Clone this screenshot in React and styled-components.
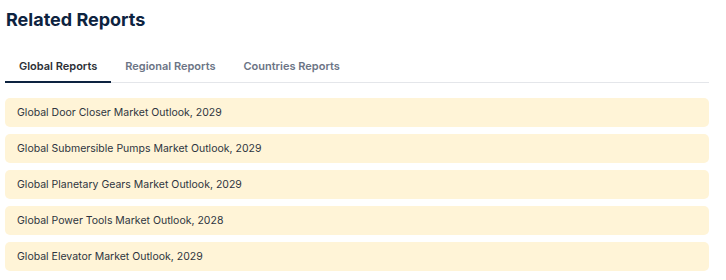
import React, { useState } from "react";
import styled, { createGlobalStyle } from "styled-components";

const GlobalStyle = createGlobalStyle`
  body {
    margin: 0;
    background: #fff;
    font-family: Inter, "Noto Sans", sans-serif;
  }
`;

const Wrapper = styled.section`
  width: 704px;
  padding: 8px 0 0 5px;
`;

const Title = styled.h2`
  margin: 0 0 0 1px;
  font-size: 18px;
  font-weight: 700;
  line-height: 24px;
  color: #0d2340;
`;

const TabBar = styled.div`
  display: flex;
  margin-top: 19px;
  border-bottom: 1px solid #e4e6ea;
`;

const Tab = styled.button`
  border: none;
  background: transparent;
  padding: 0 14px;
  height: 32px;
  margin-bottom: -1px;
  font-family: inherit;
  font-size: 11px;
  font-weight: 600;
  color: ${(p) => (p.$active ? "#2b2f36" : "#6b7485")};
  border-bottom: 2px solid ${(p) => (p.$active ? "#0d2340" : "transparent")};
  cursor: pointer;
`;

const List = styled.ul`
  list-style: none;
  margin: 15px 0 0;
  padding: 0;
  display: flex;
  flex-direction: column;
  gap: 7px;
`;

const Item = styled.li`
  height: 29px;
  display: flex;
  align-items: center;
  padding: 0 12px;
  background: #fff4d7;
  border-radius: 5px;
  font-size: 10.5px;
  color: #2e3440;
`;

const tabs = ["Global Reports", "Regional Reports", "Countries Reports"];

const reports = [
  "Global Door Closer Market Outlook, 2029",
  "Global Submersible Pumps Market Outlook, 2029",
  "Global Planetary Gears Market Outlook, 2029",
  "Global Power Tools Market Outlook, 2028",
  "Global Elevator Market Outlook, 2029",
];

export default function App() {
  const [active, setActive] = useState(0);
  return (
    <>
      <GlobalStyle />
      <Wrapper>
        <Title>Related Reports</Title>
        <TabBar>
          {tabs.map((t, i) => (
            <Tab key={t} $active={i === active} onClick={() => setActive(i)}>
              {t}
            </Tab>
          ))}
        </TabBar>
        <List>
          {reports.map((r) => (
            <Item key={r}>{r}</Item>
          ))}
        </List>
      </Wrapper>
    </>
  );
}
